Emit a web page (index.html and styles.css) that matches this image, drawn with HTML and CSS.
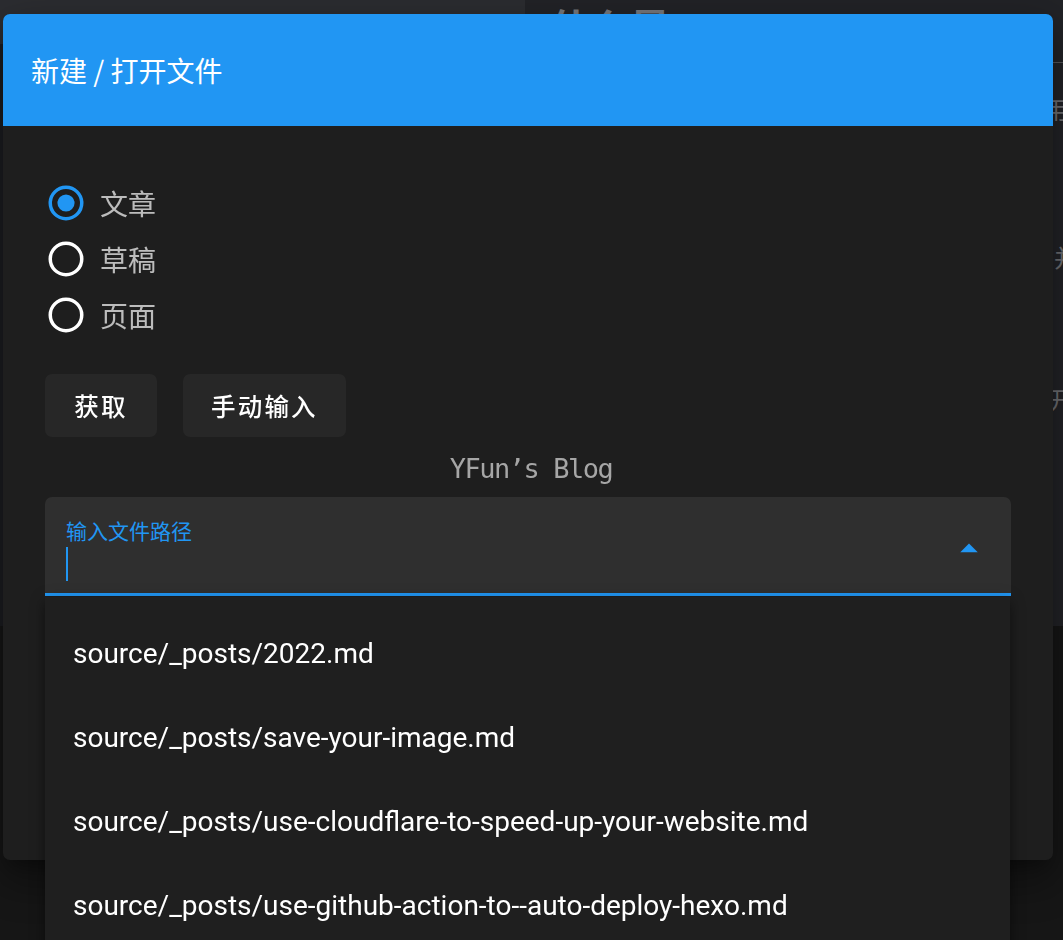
FILE: index.html
```html
<!DOCTYPE html>
<html lang="zh-CN">
<head>
<meta charset="utf-8">
<title>新建 / 打开文件</title>
<link rel="stylesheet" href="styles.css">
</head>
<body>
<div class="page">
  <aside class="editor">
    <div class="editor-toolbar"></div>
    <div class="editor-body"></div>
  </aside>
  <main class="preview">
    <h1 class="preview-title">什么是</h1>
    <hr class="preview-rule">
    <p class="preview-line l1">Hexo 是一个快速、简洁且高效的博客框架，使用 Markdown 解析文章三</p>
    <p class="preview-line l2">在几秒内，即可利用靓丽的主题生成静态网页，并保留留</p>
    <p class="preview-line l3">安装 Hexo 只需几分钟时间，打开终端，即可开开</p>
    <p class="preview-line l4">npm install hexo-cli -g && hexo init blog aa</p>
    <p class="preview-line l5">.config.yml 配置文件说明 .pp</p>
  </main>
</div>

<div class="dialog">
  <header class="dialog-title">新建 / 打开文件</header>
  <div class="dialog-body">
    <div class="radios">
      <div class="radio">
        <svg class="radio-icon checked" viewBox="0 0 24 24"><circle cx="12" cy="12" r="9" fill="none" stroke-width="2"/><circle class="dot" cx="12" cy="12" r="4.9"/></svg>
        <span class="radio-label">文章</span>
      </div>
      <div class="radio">
        <svg class="radio-icon" viewBox="0 0 24 24"><circle cx="12" cy="12" r="9" fill="none" stroke-width="2"/></svg>
        <span class="radio-label">草稿</span>
      </div>
      <div class="radio">
        <svg class="radio-icon" viewBox="0 0 24 24"><circle cx="12" cy="12" r="9" fill="none" stroke-width="2"/></svg>
        <span class="radio-label">页面</span>
      </div>
    </div>

    <div class="actions">
      <button class="btn">获取</button>
      <button class="btn">手动输入</button>
    </div>

    <div class="blog-name">YFun’s Blog</div>

    <div class="field-wrap">
      <div class="field">
        <div class="field-main">
          <div class="field-label">输入文件路径</div>
          <div class="caret"></div>
        </div>
        <svg class="field-icon" viewBox="0 0 24 24"><path d="M7 15l5-5 5 5z"/></svg>
      </div>
      <div class="menu">
        <div class="menu-item">source/_posts/2022.md</div>
        <div class="menu-item">source/_posts/save-your-image.md</div>
        <div class="menu-item">source/_posts/use-cloudflare-to-speed-up-your-website.md</div>
        <div class="menu-item">source/_posts/use-github-action-to--auto-deploy-hexo.md</div>
      </div>
    </div>
  </div>
</div>
</body>
</html>
```
FILE: styles.css
```css
html, body {
  margin: 0;
  padding: 0;
  height: 100%;
  overflow: hidden;
}

body {
  background: #161616;
  font-family: Roboto, "Noto Sans CJK SC", sans-serif;
}

/* background page (behind the dialog scrim) */
.page {
  display: grid;
  grid-template-columns: 525px 1fr;
  height: 626px;
}

.editor {
  display: flex;
  flex-direction: column;
  background: #1c1d21;
}

.editor-toolbar {
  height: 44px;
  background: #2c2d31;
}

.editor-body {
  flex: 1;
}

.preview {
  background: #222327;
  padding: 0 0 0 25px;
  overflow: hidden;
  color: #6f7074;
  font-family: "Noto Sans CJK SC", sans-serif;
}

.preview-title {
  margin: -2px 0 0;
  font-size: 40px;
  line-height: 56px;
  font-weight: 700;
  color: #77787c;
  white-space: nowrap;
}

.preview-rule {
  margin: 8px -20px 0 0;
  border: 0;
  border-top: 1px solid #56575b;
}

.preview-line {
  margin: 0;
  font-size: 24px;
  line-height: 32px;
  white-space: nowrap;
}

.l1 { margin-top: 30px; }
.l2 { margin-top: 116px; }
.l3 { margin-top: 110px; }
.l4 { margin-top: 78px; }
.l5 { margin-top: 10px; font-size: 18px; }

/* dialog */
.dialog {
  position: fixed;
  left: 3px;
  top: 14px;
  width: 1050px;
  height: 846px;
  background: #1e1e1e;
  border-radius: 7px;
  box-shadow: 0 11px 15px -7px rgba(0, 0, 0, 0.3), 0 24px 38px 3px rgba(0, 0, 0, 0.2), 0 9px 46px 8px rgba(0, 0, 0, 0.18);
}

.dialog-title {
  height: 112px;
  display: flex;
  align-items: center;
  padding: 0 28px;
  background: #2196f3;
  border-radius: 7px 7px 0 0;
  color: #ffffff;
  font-family: "Noto Sans CJK SC", sans-serif;
  font-size: 28px;
  font-weight: 400;
}

.dialog-body {
  padding: 56px 42px 0;
}

.radios {
  display: flex;
  flex-direction: column;
  gap: 14px;
}

.radio {
  display: flex;
  align-items: center;
  height: 42px;
}

.radio-icon {
  width: 42px;
  height: 42px;
  flex: none;
  stroke: #ffffff;
}

.radio-icon.checked {
  stroke: #2196f3;
}

.radio-icon .dot {
  fill: #2196f3;
  stroke: none;
}

.radio-label {
  margin-left: 13px;
  font-family: "Noto Sans CJK SC", sans-serif;
  font-size: 28px;
  line-height: 42px;
  color: rgba(255, 255, 255, 0.7);
}

.actions {
  display: flex;
  gap: 26px;
  margin-top: 38px;
}

.btn {
  height: 63px;
  min-width: 112px;
  padding: 0 28px;
  border: 0;
  border-radius: 7px;
  background: #272727;
  color: #ffffff;
  font-family: Roboto, "Noto Sans CJK SC", sans-serif;
  font-size: 24.5px;
  font-weight: 500;
  letter-spacing: 2.2px;
}

.blog-name {
  margin-top: 16px;
  padding-left: 6px;
  text-align: center;
  font-family: "DejaVu Sans Mono", monospace;
  font-size: 27px;
  line-height: 32px;
  letter-spacing: -1.5px;
  color: #a6a6a6;
}

.field-wrap {
  position: relative;
  margin-top: 12px;
}

.field {
  box-sizing: border-box;
  height: 99px;
  display: flex;
  padding: 0 21px 0 21px;
  background: #2f2f2f;
  border-radius: 7px 7px 0 0;
  border-bottom: 3px solid #2196f3;
}

.field-main {
  flex: 1;
  padding-top: 21px;
}

.field-label {
  font-family: "Noto Sans CJK SC", sans-serif;
  font-size: 21px;
  line-height: 24px;
  color: #2196f3;
}

.caret {
  width: 2px;
  height: 34px;
  margin-top: 5px;
  background: #2196f3;
}

.field-icon {
  width: 42px;
  height: 42px;
  align-self: center;
  margin-top: 4px;
  fill: #2196f3;
}

.menu {
  position: absolute;
  top: calc(100% + 1px);
  left: 0;
  width: 965px;
  padding: 14px 0;
  background: #1f1f1f;
  box-shadow: 0 5px 5px -3px rgba(0, 0, 0, 0.3), 0 8px 10px 1px rgba(0, 0, 0, 0.22), 0 3px 14px 2px rgba(0, 0, 0, 0.2);
}

.menu-item {
  height: 84px;
  display: flex;
  align-items: center;
  padding: 0 28px;
  font-family: Roboto, sans-serif;
  font-size: 28px;
  color: #ffffff;
  white-space: nowrap;
}
```
